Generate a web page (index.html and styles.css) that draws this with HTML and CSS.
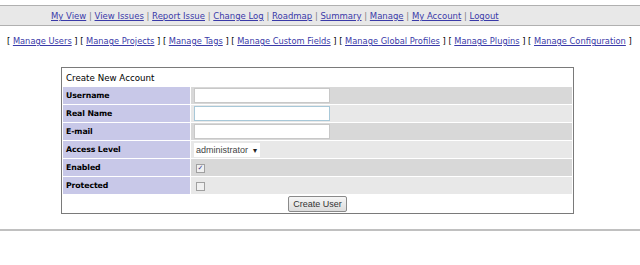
FILE: index.html
```html
<!DOCTYPE html>
<html>
<head>
    <title>Manage Users - Create New Account</title>
    <link rel="stylesheet" href="styles.css">
</head>
<body>
    <div class="menu">
        <a href="#">My View</a> | <a href="#">View Issues</a> | <a href="#">Report Issue</a> | <a href="#">Change Log</a> | <a href="#">Roadmap</a> | <a href="#">Summary</a> | <a href="#">Manage</a> | <a href="#">My Account</a> | <a href="#">Logout</a>
    </div>

    <div class="submenu">
        [ <a href="#">Manage Users</a> ] [ <a href="#">Manage Projects</a> ] [ <a href="#">Manage Tags</a> ] [ <a href="#">Manage Custom Fields</a> ] [ <a href="#">Manage Global Profiles</a> ] [ <a href="#">Manage Plugins</a> ] [ <a href="#">Manage Configuration</a> ]
    </div>

    <form class="account-form">
        <table class="width75">
            <tr>
                <td class="form-title" colspan="2">Create New Account</td>
            </tr>
            <tr class="row-1">
                <td class="category">Username</td>
                <td><input type="text" class="field"></td>
            </tr>
            <tr class="row-2">
                <td class="category">Real Name</td>
                <td><input type="text" class="field focused"></td>
            </tr>
            <tr class="row-1">
                <td class="category">E-mail</td>
                <td><input type="text" class="field"></td>
            </tr>
            <tr class="row-2">
                <td class="category">Access Level</td>
                <td><span class="select">administrator <span class="arrow">&#9662;</span></span></td>
            </tr>
            <tr class="row-1">
                <td class="category">Enabled</td>
                <td><span class="check checked">&#10003;</span></td>
            </tr>
            <tr class="row-2">
                <td class="category">Protected</td>
                <td><span class="check"></span></td>
            </tr>
            <tr>
                <td class="center" colspan="2"><button type="button" class="button">Create User</button></td>
            </tr>
        </table>
    </form>

    <hr class="footer-rule">
</body>
</html>
```

FILE: styles.css
```css
body {
    margin: 0;
    padding-top: 5px;
    background: #ffffff;
    color: #000000;
    font-family: "DejaVu Sans", Verdana, sans-serif;
    font-size: 8.5px;
}

a {
    color: #3a3aa8;
    text-decoration: underline;
}

.menu {
    background: #e8e8e8;
    border-top: 1px solid #b0b0b0;
    border-bottom: 1px solid #b0b0b0;
    height: 19px;
    line-height: 20px;
    padding-left: 51px;
    color: #808080;
}

.submenu {
    padding: 10px 0 0 7px;
    font-size: 8.3px;
    white-space: nowrap;
    color: #000;
}

.account-form {
    margin: 21px 0 0 61px;
}

.width75 {
    width: 513px;
    border: 1px solid #7a7a7a;
    border-spacing: 1px;
    background: #ffffff;
}

.width75 td {
    height: 17px;
    padding: 0 3px;
    vertical-align: middle;
}

.form-title {
    font-size: 8.7px;
    background: #ffffff;
}

.category {
    width: 121px;
    background: #c8c8e8;
    font-weight: bold;
    font-size: 7.8px;
    letter-spacing: -0.1px;
}

.row-1 td:last-child {
    background: #d8d8d8;
}

.row-2 td:last-child {
    background: #e8e8e8;
}

.field {
    display: block;
    box-sizing: border-box;
    width: 136px;
    height: 15px;
    margin: 0;
    border: 1px solid #c8c8c8;
    background: #ffffff;
}

.field.focused {
    border-color: #a8c8d8;
}

.select {
    display: inline-block;
    height: 14px;
    line-height: 14px;
    padding: 0 3px 0 2px;
    background: #ffffff;
    color: #444;
    font-family: "Liberation Sans", Arial, sans-serif;
    font-size: 9px;
}

.arrow {
    font-size: 8px;
    margin-left: 2px;
    color: #222;
}

.check {
    display: inline-block;
    box-sizing: border-box;
    width: 9px;
    height: 9px;
    margin-left: 2px;
    border: 1px solid #a0a0a0;
    background: #f0f0f0;
    font-size: 7px;
    line-height: 7px;
    text-align: center;
    color: #3a3a8a;
    vertical-align: middle;
}

.center {
    text-align: center;
}

.button {
    height: 16px;
    padding: 0 4px;
    border: 1px solid #8a8a8a;
    border-radius: 2px;
    background: linear-gradient(#f6f6f6, #dcdcdc);
    font-family: "Liberation Sans", Arial, sans-serif;
    font-size: 9px;
    color: #333;
}

.footer-rule {
    margin: 15px 0 0 0;
    border: none;
    border-top: 2px solid #c0c0c0;
}
```
